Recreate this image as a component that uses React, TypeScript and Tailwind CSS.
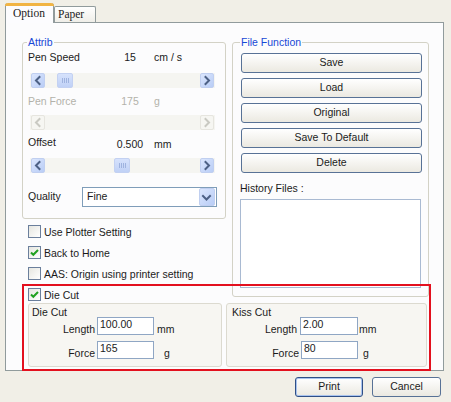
import React from "react";

const font = { fontFamily: '"Liberation Sans", Arial, sans-serif' };

function Arrow({ dir, disabled }: { dir: "left" | "right" | "down"; disabled?: boolean }) {
  const color = disabled ? "#c9c9c2" : "#4d6185";
  const d =
    dir === "left"
      ? "M8.5 4 L5 7.5 L8.5 11"
      : dir === "right"
      ? "M5.5 4 L9 7.5 L5.5 11"
      : "M4 6 L7.5 9.5 L11 6";
  return (
    <svg width="14" height="15" viewBox="0 0 14 15" className="block">
      <path d={d} fill="none" stroke={color} strokeWidth="2" strokeLinecap="square" />
    </svg>
  );
}

function ScrollBtn({ dir, disabled }: { dir: "left" | "right"; disabled?: boolean }) {
  return (
    <div
      className={
        disabled
          ? "h-[15px] w-[14px] rounded-[2px] border border-[#e6e5df] bg-[#f6f6f2]"
          : "h-[15px] w-[14px] rounded-[2px] border border-[#c0cff0] bg-gradient-to-br from-[#dbe6fd] to-[#b9cdf6]"
      }
    >
      <div className="-m-px">
        <Arrow dir={dir} disabled={disabled} />
      </div>
    </div>
  );
}

function Thumb({ offset }: { offset: string }) {
  return (
    <div
      className={
        "flex h-[15px] w-[16px] items-center justify-center gap-[1px] rounded-[2px] border border-[#c3d1f2] bg-gradient-to-b from-[#d6e2fc] to-[#c0d1f6] " +
        offset
      }
    >
      <div className="h-[5px] w-px bg-[#9fb3df]" />
      <div className="h-[5px] w-px bg-[#9fb3df]" />
      <div className="h-[5px] w-px bg-[#9fb3df]" />
      <div className="h-[5px] w-px bg-[#9fb3df]" />
    </div>
  );
}

function Scroll({ thumb, disabled, className }: { thumb?: string; disabled?: boolean; className: string }) {
  return (
    <div className={"ml-[2px] flex h-[15px] w-[185px] items-center bg-[#f5f5f1] px-[1px] " + className}>
      <ScrollBtn dir="left" disabled={disabled} />
      {thumb !== undefined && <Thumb offset={thumb} />}
      <div className="flex-1" />
      <ScrollBtn dir="right" disabled={disabled} />
    </div>
  );
}

function Check({ checked, label, className }: { checked?: boolean; label: string; className?: string }) {
  return (
    <div className={"ml-[6px] flex h-[13px] items-center " + (className ?? "")}>
      <div className="flex h-[13px] w-[13px] items-center justify-center border border-[#6b7f9c] bg-gradient-to-br from-[#e6e6e0] to-white">
        {checked && (
          <svg width="11" height="11" viewBox="0 0 11 11">
            <path d="M2 5.5 L4.3 7.8 L9 3" fill="none" stroke="#21a121" strokeWidth="2" />
          </svg>
        )}
      </div>
      <span className="ml-[3px] text-[10.5px] leading-[12px] text-[#1b1b1b]">{label}</span>
    </div>
  );
}

function XpButton({ label }: { label: string }) {
  return (
    <div className="flex h-[20px] w-[181px] items-center justify-center rounded-[3px] border border-[#587296] bg-gradient-to-b from-white to-[#ebe9e1] text-[10.5px] text-[#1b1b1b]">
      {label}
    </div>
  );
}

function Field({ value, w }: { value: string; w: string }) {
  return (
    <div className={"h-[18px] border border-[#8fa6c4] bg-white px-[2px] text-[10.5px] leading-[12px] " + w}>
      {value}
    </div>
  );
}

export default function App() {
  return (
    <div className="relative h-[402px] w-[451px] overflow-hidden bg-[#f1efe7] text-[#1b1b1b]" style={font}>
      {/* Tabs */}
      <div className="flex h-[22px] items-end pl-[5px]" style={{ fontFamily: '"Liberation Serif", "Times New Roman", serif' }}>
        <div className="relative z-10 -mb-px flex h-[20px] w-[49px] flex-col rounded-t-[3px] border-x border-[#919b9c] bg-[#fcfcfe]">
          <div className="-mx-px h-[3px] rounded-t-[3px] bg-[#f1b443]" />
          <div className="pl-[7px] text-[11.5px] leading-[14px]">Option</div>
        </div>
        <div className="flex h-[16px] w-[42px] items-center rounded-t-[2px] border-x border-t border-[#919b9c] bg-gradient-to-b from-white to-[#efeee8] pl-[3px] text-[11.5px] leading-[13px]">
          Paper
        </div>
      </div>

      {/* Panel */}
      <div className="ml-[5px] h-[349px] w-[439px] border border-[#919b9c] bg-[#fcfcfd] pl-[16px] pt-[13px]">
        <div className="flex gap-[6px]">
          {/* Left column */}
          <div className="flex w-[204px] flex-col">
            <fieldset className="m-0 h-[183px] rounded-[3px] border border-[#d3d2c6] px-[5px] pb-0 pt-0">
              <legend className="-ml-px px-px text-[10.5px] leading-[13px] text-[#1748d6]">Attrib</legend>
              <div className="mt-[2px] flex h-[12px] items-center text-[10.5px] leading-[12px]">
                <span className="w-[82px]">Pen Speed</span>
                <span className="w-[40px] text-center">15</span>
                <span className="ml-[4px]">cm / s</span>
              </div>
              <Scroll thumb="ml-[12px]" className="mt-[10px]" />
              <div className="mt-[7px] flex h-[12px] items-center text-[10.5px] leading-[12px] text-[#b3b2aa]">
                <span className="w-[82px]">Pen Force</span>
                <span className="w-[40px] text-center">175</span>
                <span className="ml-[4px]">g</span>
              </div>
              <Scroll disabled className="mt-[8px]" />
              <div className="mt-[6px] flex h-[14px] text-[10.5px] leading-[12px]">
                <span className="w-[82px] self-start">Offset</span>
                <span className="w-[40px] self-end text-center">0.500</span>
                <span className="ml-[4px] self-end">mm</span>
              </div>
              <Scroll thumb="ml-[69px]" className="mt-[8px]" />
              <div className="mt-[14px] flex h-[20px] items-center text-[10.5px]">
                <span className="w-[54px]">Quality</span>
                <div className="flex h-[20px] w-[135px] items-center border border-[#7f9db9] bg-white pl-[4px]">
                  <span className="flex-1">Fine</span>
                  <div className="mr-px h-[18px] w-[16px] rounded-[2px] border border-[#c0cff0] bg-gradient-to-br from-[#dbe6fd] to-[#b9cdf6]">
                    <div className="-ml-px mt-px">
                      <Arrow dir="down" />
                    </div>
                  </div>
                </div>
              </div>
            </fieldset>
            <Check label="Use Plotter Setting" className="mt-[6px]" />
            <Check checked label="Back to Home" className="mt-[8px]" />
            <Check label="AAS: Origin using printer setting" className="mt-[8px]" />
            <Check checked label="Die Cut" className="mt-[8px]" />
          </div>

          {/* Right column */}
          <fieldset className="m-0 h-[261px] w-[197px] rounded-[3px] border border-[#d3d2c6] pb-0 pl-[8px] pr-[6px] pt-0">
            <legend className="-ml-px px-px text-[10.5px] leading-[13px] text-[#1748d6]">File Function</legend>
            <div className="mt-[4px] flex flex-col gap-[5px]">
              <XpButton label="Save" />
              <XpButton label="Load" />
              <XpButton label="Original" />
              <XpButton label="Save To Default" />
              <XpButton label="Delete" />
            </div>
            <div className="-ml-px mt-[9px] text-[10.5px] leading-[12px]">History Files :</div>
            <div className="-ml-px mt-[5px] h-[89px] w-[181px] border border-[#a9bad2] bg-white" />
          </fieldset>
        </div>

        {/* Die Cut / Kiss Cut */}
        <div className="mt-[2px] flex gap-[4px] pl-[6px]">
          <div className="h-[64px] w-[194px] rounded-[3px] border border-[#dcdad0] bg-[#f7f6f2] pt-[3px] text-[10.5px]">
            <div className="pl-[3px] leading-[11px]">Die Cut</div>
            <div className="-mt-px flex h-[18px] items-end">
              <span className="w-[66px] text-right leading-[12px]">Length</span>
              <div className="ml-[2px]">
                <Field value="100.00" w="w-[57px]" />
              </div>
              <span className="ml-[3px] leading-[11px]">mm</span>
            </div>
            <div className="mt-[6px] flex h-[18px] items-end">
              <span className="w-[66px] text-right leading-[12px]">Force</span>
              <div className="ml-[2px]">
                <Field value="165" w="w-[57px]" />
              </div>
              <span className="ml-[10px] leading-[11px]">g</span>
            </div>
          </div>
          <div className="h-[64px] w-[201px] rounded-[3px] border border-[#dcdad0] bg-[#f7f6f2] pt-[3px] text-[10.5px]">
            <div className="pl-[5px] leading-[11px]">Kiss Cut</div>
            <div className="-mt-px flex h-[18px] items-end">
              <span className="w-[70px] text-right leading-[12px]">Length</span>
              <div className="ml-[3px]">
                <Field value="2.00" w="w-[58px]" />
              </div>
              <span className="ml-px leading-[11px]">mm</span>
            </div>
            <div className="mt-[6px] flex h-[18px] items-end">
              <span className="w-[72px] text-right leading-[12px]">Force</span>
              <div className="ml-[2px]">
                <Field value="80" w="w-[57px]" />
              </div>
              <span className="ml-[5px] leading-[11px]">g</span>
            </div>
          </div>
        </div>
      </div>

      {/* Dialog buttons */}
      <div className="mt-[6px] flex justify-end gap-[9px] pr-[10px]">
        <div className="flex h-[20px] w-[68px] items-center justify-center rounded-[3px] border border-[#2f4f86] bg-gradient-to-b from-white to-[#ebe9e1] text-[10.5px] shadow-[inset_0_0_0_1px_#a9c3ee]">
          Print
        </div>
        <div className="flex h-[20px] w-[69px] items-center justify-center rounded-[3px] border border-[#587296] bg-gradient-to-b from-white to-[#ebe9e1] text-[10.5px]">
          Cancel
        </div>
      </div>

      {/* Red annotation */}
      <div className="pointer-events-none absolute left-[22px] top-[284px] h-[87px] w-[409px] border-2 border-[#e3101e]" />
    </div>
  );
}
